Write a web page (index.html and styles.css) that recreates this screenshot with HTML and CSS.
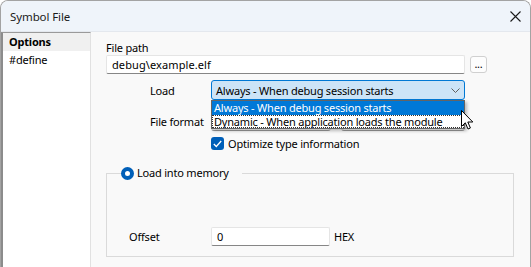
FILE: index.html
```html
<!DOCTYPE html>
<html lang="en">
<head>
  <meta charset="UTF-8" />
  <title>Symbol File</title>
  <link rel="stylesheet" href="styles.css">
</head>
<body>
  <div class="window">
    <div class="titlebar">
      <span class="title">Symbol File</span>
      <svg class="close" width="11" height="11" viewBox="0 0 11 11"><path d="M0.5 0.5 L10.5 10.5 M10.5 0.5 L0.5 10.5" stroke="#1a1a1a" stroke-width="1.1" fill="none"/></svg>
    </div>

    <div class="body">
      <ul class="nav">
        <li class="active">Options</li>
        <li>#define</li>
      </ul>

      <div class="pane">
        <div class="caption">File path</div>
        <div class="path-row">
          <div class="textbox wide">debug\example.elf</div>
          <div class="browse">...</div>
        </div>

        <div class="row load-row">
          <span class="lbl">Load</span>
          <div class="combo-wrap">
            <div class="combo open">
              <span>Always - When debug session starts</span>
              <svg width="9" height="5" viewBox="0 0 9 5"><path d="M0.5 0.5 L4.5 4.5 L8.5 0.5" stroke="#5f5f5f" stroke-width="1" fill="none"/></svg>
            </div>
            <ul class="dropdown">
              <li class="sel">Always - When debug session starts</li>
              <li class="focus">Dynamic - When application loads the module</li>
            </ul>
            <svg class="cursor" width="13" height="20" viewBox="0 0 13 20"><path d="M0.5 0.5 L0.5 16.5 L4.3 12.8 L7 19 L9.4 18 L6.8 12 L11.8 12 Z" fill="#fff" stroke="#000" stroke-width="1"/></svg>
          </div>
        </div>

        <div class="row format-row">
          <span class="lbl">File format</span>
          <div class="combo plain first"></div>
          <div class="combo plain second"></div>
        </div>

        <div class="row check-row">
          <span class="checkbox">
            <svg width="9" height="8" viewBox="0 0 9 8"><path d="M0.8 4 L3.3 6.5 L8.2 1" stroke="#fff" stroke-width="1.3" fill="none"/></svg>
          </span>
          <span>Optimize type information</span>
        </div>

        <fieldset class="group">
          <legend><span class="radio"></span>Load into memory</legend>
          <div class="row offset-row">
            <span class="lbl">Offset</span>
            <div class="textbox offset">0</div>
            <span class="unit">HEX</span>
          </div>
        </fieldset>
      </div>
    </div>
  </div>
</body>
</html>
```

FILE: styles.css
```css
html, body {
  margin: 0;
  padding: 0;
  background: #fff;
}

body {
  font-family: 'Noto Sans', 'Open Sans', sans-serif;
  font-size: 11px;
  letter-spacing: -0.2px;
  color: #000;
}

.window {
  width: 531px;
  height: 267px;
  box-sizing: border-box;
  border: 1px solid #a3a3a3;
  border-bottom: none;
  border-radius: 8px 8px 0 0;
  overflow: hidden;
  display: flex;
  flex-direction: column;
  background: #f9f9f9;
}

.titlebar {
  height: 30px;
  flex: none;
  display: flex;
  align-items: center;
  justify-content: space-between;
  padding: 0 9px 0 9px;
  background: #eff4fa;
  border-bottom: 1px solid #e4e8ee;
}

.title {
  font-size: 11.5px;
  letter-spacing: -0.1px;
  color: #1b1b1b;
}

.body {
  flex: 1;
  display: flex;
  min-height: 0;
}

/* left list */
.nav {
  list-style: none;
  margin: 0;
  padding: 0;
  width: 87px;
  flex: none;
  background: #fff;
  border-left: 2px solid #8c8c8c;
  border-top: 1px solid #9a9a9a;
  border-right: 1px solid #e1e1e1;
}

.nav li {
  height: 18px;
  line-height: 18px;
  padding-left: 6px;
}

.nav li.active {
  background: #f0f0f0;
  font-weight: bold;
}

/* right pane */
.pane {
  flex: 1;
  padding: 8px 16px 0 15px;
}

.caption {
  line-height: 16px;
}

.path-row {
  display: flex;
  align-items: center;
  gap: 5px;
  margin-top: -1px;
}

.textbox {
  box-sizing: border-box;
  height: 19px;
  line-height: 17px;
  background: #fff;
  border: 1px solid #e5e5e5;
  border-bottom-color: #868686;
  border-radius: 2px;
  padding: 0 5px;
}

.textbox.wide {
  width: 359px;
  letter-spacing: 0.1px;
}

.browse {
  box-sizing: border-box;
  width: 17px;
  height: 17px;
  border: 1px solid #d0d0d0;
  border-radius: 3px;
  background: #fdfdfd;
  text-align: center;
  line-height: 13px;
}

.row {
  display: flex;
  align-items: center;
}

.lbl {
  width: 61px;
  flex: none;
  padding-left: 44px;
}

.load-row {
  margin-top: 6px;
}

.combo-wrap {
  position: relative;
}

.combo {
  box-sizing: border-box;
  height: 20px;
  border-radius: 3px;
  display: flex;
  align-items: center;
  justify-content: space-between;
  padding: 0 4px 0 4px;
}

.combo.open {
  width: 254px;
  background: #cce4f7;
  border: 1px solid #0078d4;
}

.combo.plain {
  background: #fdfdfd;
  border: 1px solid #d3d3d3;
  border-bottom-color: #9a9a9a;
}

.combo.first {
  width: 120px;
}

.combo.second {
  width: 124px;
  margin-left: 10px;
}

.dropdown {
  list-style: none;
  margin: 0;
  padding: 0;
  position: absolute;
  top: 20px;
  left: 0;
  width: 254px;
  box-sizing: border-box;
  background: #fff;
  border: 1px solid #646464;
  box-shadow: 2px 2px 3px rgba(0, 0, 0, 0.25);
  z-index: 2;
}

.dropdown li {
  height: 13px;
  line-height: 13px;
  padding-left: 2px;
  white-space: nowrap;
  overflow: hidden;
}

.dropdown li.sel {
  background: #0078d7;
  color: #fff;
  height: 14px;
}

.dropdown li.focus {
  outline: 1px dotted #333;
  outline-offset: -1px;
}

.cursor {
  position: absolute;
  left: 250px;
  top: 30px;
  z-index: 3;
}

.format-row {
  margin-top: 11px;
}

.check-row {
  margin-top: 5px;
  padding-left: 105px;
  gap: 4px;
}

.checkbox {
  width: 13px;
  height: 13px;
  border-radius: 3px;
  background: #005fb8;
  display: flex;
  align-items: center;
  justify-content: center;
}

.group {
  margin: 14px 0 0 0;
  padding: 0 0 10px 14px;
  border: 1px solid #dadada;
}

.group legend {
  padding: 0 13px 0 0;
  display: flex;
  align-items: center;
  gap: 3px;
  line-height: 16px;
}

.radio {
  box-sizing: border-box;
  width: 13px;
  height: 13px;
  border-radius: 50%;
  border: 4px solid #005fb8;
  background: #fff;
}

.offset-row {
  margin-top: 46px;
}

.offset-row .lbl {
  width: 82px;
  padding-left: 8px;
}

.textbox.offset {
  width: 119px;
}

.unit {
  margin-left: 4px;
}
```
